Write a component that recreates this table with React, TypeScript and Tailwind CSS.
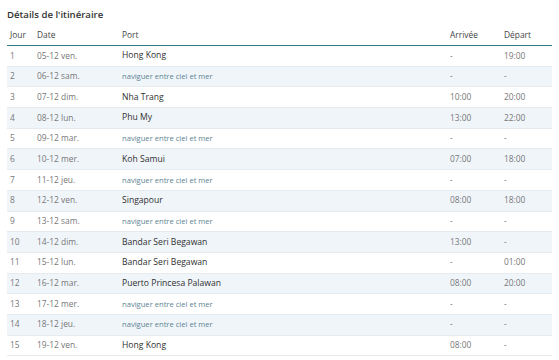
const rows: [number, string, string, boolean, string, string][] = [
  [1, "05-12 ven.", "Hong Kong", true, "-", "19:00"],
  [2, "06-12 sam.", "naviguer entre ciel et mer", false, "-", "-"],
  [3, "07-12 dim.", "Nha Trang", true, "10:00", "20:00"],
  [4, "08-12 lun.", "Phu My", true, "13:00", "22:00"],
  [5, "09-12 mar.", "naviguer entre ciel et mer", false, "-", "-"],
  [6, "10-12 mer.", "Koh Samui", true, "07:00", "18:00"],
  [7, "11-12 jeu.", "naviguer entre ciel et mer", false, "-", "-"],
  [8, "12-12 ven.", "Singapour", true, "08:00", "18:00"],
  [9, "13-12 sam.", "naviguer entre ciel et mer", false, "-", "-"],
  [10, "14-12 dim.", "Bandar Seri Begawan", true, "13:00", "-"],
  [11, "15-12 lun.", "Bandar Seri Begawan", true, "-", "01:00"],
  [12, "16-12 mar.", "Puerto Princesa Palawan", true, "08:00", "20:00"],
  [13, "17-12 mer.", "naviguer entre ciel et mer", false, "-", "-"],
  [14, "18-12 jeu.", "naviguer entre ciel et mer", false, "-", "-"],
  [15, "19-12 ven.", "Hong Kong", true, "08:00", "-"],
];

export default function App() {
  return (
    <div className="w-[559px] h-[360px] bg-white px-[7px] pt-[8px] font-['Open_Sans',sans-serif] text-[#555]">
      <h2 className="text-[9.6px] font-semibold text-[#333] leading-[14px]">Détails de l'itinéraire</h2>
      <table className="mt-[4px] w-[545px] table-fixed border-collapse text-[8.4px]">
        <colgroup>
          <col className="w-[27px]" />
          <col className="w-[85px]" />
          <col className="w-[328px]" />
          <col className="w-[54px]" />
          <col />
        </colgroup>
        <thead>
          <tr className="h-[19.5px] border-b-[1.5px] border-[#2e7b8c] text-[#444]">
            <th className="text-left font-normal px-[3px]">Jour</th>
            <th className="text-left font-normal px-[3px]">Date</th>
            <th className="text-left font-normal px-[3px]">Port</th>
            <th className="text-left font-normal px-[3px]">Arrivée</th>
            <th className="text-left font-normal px-[3px]">Départ</th>
          </tr>
        </thead>
        <tbody>
          {rows.map(([n, date, port, isPort, arr, dep]) => (
            <tr key={n} className={`h-[20.7px] border-b border-[#e6ebef] ${n % 2 === 0 ? "bg-[#f0f5fa]" : "bg-white"}`}>
              <td className="px-[3px] text-[#777]">{n}</td>
              <td className="px-[3px] text-[#777]">{date}</td>
              <td className="px-[3px]">
                {isPort ? (
                  <span className="text-[8.6px] text-[#2f2f2f]">{port}</span>
                ) : (
                  <span className="text-[7.6px] text-[#5d8492]">{port}</span>
                )}
              </td>
              <td className="px-[3px] text-[#777]">{arr}</td>
              <td className="px-[3px] text-[#777]">{dep}</td>
            </tr>
          ))}
        </tbody>
      </table>
    </div>
  );
}
